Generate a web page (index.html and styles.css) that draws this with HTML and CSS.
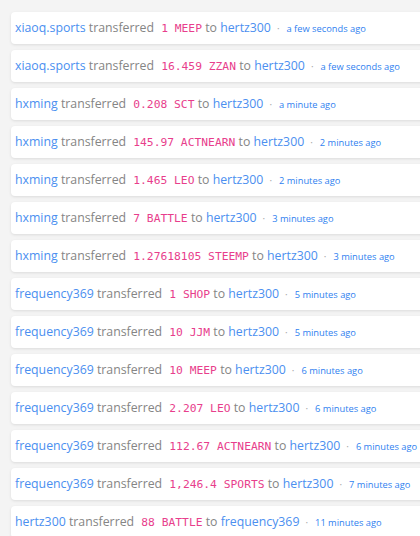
FILE: index.html
```html
<!DOCTYPE html>
<html>
<head>
<meta charset="utf-8">
<link rel="stylesheet" href="styles.css">
</head>
<body>
<div class="feed">
  <div class="card"><a class="user">xiaoq.sports</a> <span class="verb">transferred</span> <code class="amt">1 MEEP</code> <span class="verb">to</span> <a class="user">hertz300</a><span class="dot">·</span><span class="time">a few seconds ago</span></div>
  <div class="card"><a class="user">xiaoq.sports</a> <span class="verb">transferred</span> <code class="amt">16.459 ZZAN</code> <span class="verb">to</span> <a class="user">hertz300</a><span class="dot">·</span><span class="time">a few seconds ago</span></div>
  <div class="card"><a class="user">hxming</a> <span class="verb">transferred</span> <code class="amt">0.208 SCT</code> <span class="verb">to</span> <a class="user">hertz300</a><span class="dot">·</span><span class="time">a minute ago</span></div>
  <div class="card"><a class="user">hxming</a> <span class="verb">transferred</span> <code class="amt">145.97 ACTNEARN</code> <span class="verb">to</span> <a class="user">hertz300</a><span class="dot">·</span><span class="time">2 minutes ago</span></div>
  <div class="card"><a class="user">hxming</a> <span class="verb">transferred</span> <code class="amt">1.465 LEO</code> <span class="verb">to</span> <a class="user">hertz300</a><span class="dot">·</span><span class="time">2 minutes ago</span></div>
  <div class="card"><a class="user">hxming</a> <span class="verb">transferred</span> <code class="amt">7 BATTLE</code> <span class="verb">to</span> <a class="user">hertz300</a><span class="dot">·</span><span class="time">3 minutes ago</span></div>
  <div class="card"><a class="user">hxming</a> <span class="verb">transferred</span> <code class="amt">1.27618105 STEEMP</code> <span class="verb">to</span> <a class="user">hertz300</a><span class="dot">·</span><span class="time">3 minutes ago</span></div>
  <div class="card"><a class="user">frequency369</a> <span class="verb">transferred</span> <code class="amt">1 SHOP</code> <span class="verb">to</span> <a class="user">hertz300</a><span class="dot">·</span><span class="time">5 minutes ago</span></div>
  <div class="card"><a class="user">frequency369</a> <span class="verb">transferred</span> <code class="amt">10 JJM</code> <span class="verb">to</span> <a class="user">hertz300</a><span class="dot">·</span><span class="time">5 minutes ago</span></div>
  <div class="card"><a class="user">frequency369</a> <span class="verb">transferred</span> <code class="amt">10 MEEP</code> <span class="verb">to</span> <a class="user">hertz300</a><span class="dot">·</span><span class="time">6 minutes ago</span></div>
  <div class="card"><a class="user">frequency369</a> <span class="verb">transferred</span> <code class="amt">2.207 LEO</code> <span class="verb">to</span> <a class="user">hertz300</a><span class="dot">·</span><span class="time">6 minutes ago</span></div>
  <div class="card"><a class="user">frequency369</a> <span class="verb">transferred</span> <code class="amt">112.67 ACTNEARN</code> <span class="verb">to</span> <a class="user">hertz300</a><span class="dot">·</span><span class="time">6 minutes ago</span></div>
  <div class="card"><a class="user">frequency369</a> <span class="verb">transferred</span> <code class="amt">1,246.4 SPORTS</code> <span class="verb">to</span> <a class="user">hertz300</a><span class="dot">·</span><span class="time">7 minutes ago</span></div>
  <div class="card"><a class="user">hertz300</a> <span class="verb">transferred</span> <code class="amt">88 BATTLE</code> <span class="verb">to</span> <a class="user">frequency369</a><span class="dot">·</span><span class="time">11 minutes ago</span></div>
</div>
</body>
</html>
```
FILE: styles.css
```css
html, body {
  margin: 0;
  padding: 0;
  overflow: hidden;
  background: #f4f4f4;
}
body {
  font-family: "Open Sans", "Noto Sans", sans-serif;
  font-size: 12.3px;
}
.feed {
  display: flex;
  flex-direction: column;
  gap: 6px;
  padding: 12px 0 0 11px;
  width: 440px;
}
.card {
  height: 32px;
  line-height: 32px;
  box-sizing: border-box;
  background: #fff;
  border-radius: 4px;
  box-shadow: 0 1px 3px rgba(0,0,0,0.1);
  padding: 0 4px;
  white-space: nowrap;
  color: #888;
}
.user {
  color: #4b8ff0;
}
.verb {
  color: #858585;
}
.amt {
  font-family: "DejaVu Sans Mono", "Liberation Mono", monospace;
  font-size: 11.3px;
  color: #e83e8c;
  margin-left: 4px;
}
.dot {
  color: #aaa;
  margin: 0 7px 0 6px;
  font-size: 10px;
}
.time {
  color: #2f7ff0;
  font-size: 9.3px;
}
```
